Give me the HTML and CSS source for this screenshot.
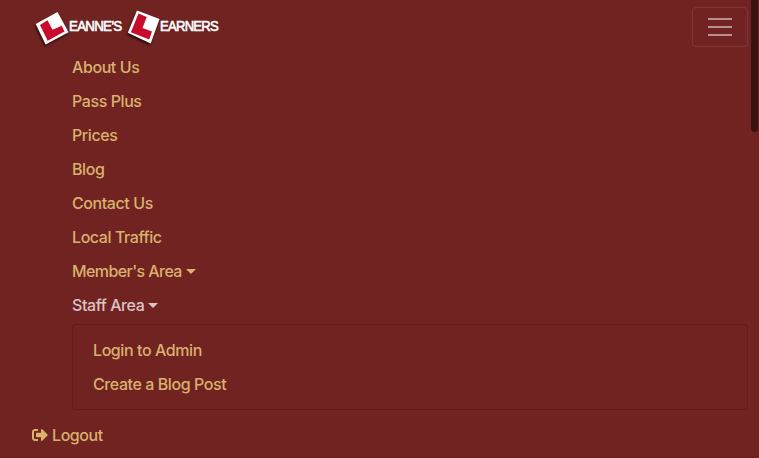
FILE: index.html
```html
<!DOCTYPE html>
<html lang="en">
<head>
<meta charset="utf-8">
<title>Leanne's Learners</title>
<link rel="stylesheet" href="styles.css">
</head>
<body>
<nav class="navbar">
  <header class="navbar-header">
    <a class="brand" aria-label="Leanne's Learners">
      <svg width="210" height="48" viewBox="32 0 210 48">
        <g class="plate">
          <path fill="#fff" d="M35.700 24L57.500 12L68.500 32.200L45.600 44.500Z"/>
          <path fill="#c80a2b" d="M40 25L47.500 20.300L52.500 29.800L61.700 25.800L64.500 31.500L47.700 40.700Z"/>
        </g>
        <text x="69" y="31" textLength="52.500" lengthAdjust="spacingAndGlyphs">EANNE’S</text>
        <g class="plate">
          <path fill="#fff" d="M137 10.500L159.500 19L150.700 43.500L127.800 32.700Z"/>
          <path fill="#c80a2b" d="M138.500 13.600L146.700 17L142.500 28L152 31.500L149.200 39.500L130.900 32.200Z"/>
        </g>
        <text x="160" y="31" textLength="58" lengthAdjust="spacingAndGlyphs">EARNERS</text>
      </svg>
    </a>
    <button class="toggler" aria-label="Toggle navigation"><span></span><span></span><span></span></button>
  </header>
  <ul class="menu">
    <li><a>About Us</a></li>
    <li><a>Pass Plus</a></li>
    <li><a>Prices</a></li>
    <li><a>Blog</a></li>
    <li><a>Contact Us</a></li>
    <li><a>Local Traffic</a></li>
    <li><a class="dropdown members">Member's Area</a></li>
    <li><a class="dropdown active">Staff Area</a></li>
  </ul>
  <ul class="submenu">
    <li><a>Login to Admin</a></li>
    <li><a>Create a Blog Post</a></li>
  </ul>
  <a class="logout"><svg width="16" height="16" viewBox="0 0 512 512"><path fill="currentColor" d="M497 273L329 441c-15 15-41 4.500-41-17v-96H152c-13.300 0-24-10.700-24-24v-96c0-13.300 10.700-24 24-24h136V88c0-21.400 25.900-32 41-17l168 168c9.300 9.400 9.300 24.600 0 34zM192 436v-40c0-6.600-5.400-12-12-12H96c-17.700 0-32-14.300-32-32V160c0-17.700 14.300-32 32-32h84c6.600 0 12-5.400 12-12V76c0-6.600-5.400-12-12-12H96c-53 0-96 43-96 96v192c0 53 43 96 96 96h84c6.600 0 12-5.400 12-12z"/></svg><span>Logout</span></a>
</nav>
<div class="scroll-thumb"></div>
</body>
</html>
```
FILE: styles.css
```css
* { box-sizing: border-box; }
body {
  margin: 0;
  height: 458px;
  overflow: hidden;
  background: #702320;
  color: #d8b26e;
  font: 500 16px/24px Inter, "Liberation Sans", sans-serif;
  letter-spacing: -0.42px;
}
.navbar {
  height: 458px;
  padding: 0 11px 0 32px;
  box-shadow: inset 0 -2px 2px -1px rgba(0, 0, 0, .12);
}
.navbar-header {
  display: flex;
  justify-content: space-between;
  height: 50px;
}
.brand svg { display: block; }
.brand text {
  font: 14px "Liberation Sans", sans-serif;
  letter-spacing: -0.8px;
  fill: #fff;
  stroke: #fff;
  stroke-width: .6px;
}
.plate { filter: drop-shadow(-1px 2px 1px rgba(0, 0, 0, .6)); }
.toggler {
  display: flex;
  flex-direction: column;
  align-items: center;
  justify-content: center;
  gap: 6px;
  width: 56px;
  height: 40px;
  margin-top: 7px;
  padding: 0;
  border: 1px solid #7e3936;
  border-radius: 4px;
  background: none;
}
.toggler span {
  width: 24px;
  height: 2px;
  background: #b98f8e;
}
ul { margin: 0; padding: 0; list-style: none; }
.menu { padding-left: 40px; }
li { height: 34px; padding: 5px 0; white-space: nowrap; }
.dropdown::after {
  content: "";
  display: inline-block;
  margin-left: 4px;
  vertical-align: 3px;
  border: 5px solid transparent;
  border-top-color: currentColor;
  border-bottom: 0;
}
.members { letter-spacing: -0.58px; }
.active { color: #dcc4c6; }
.submenu {
  height: 86px;
  margin: 2px 0 0 40px;
  padding: 8px 20px;
  border: 1px solid #611d19;
  border-radius: 4px;
}
.logout {
  display: flex;
  align-items: center;
  gap: 4px;
  margin-top: 13px;
}
.scroll-thumb {
  position: absolute;
  top: 0;
  right: 1px;
  width: 7px;
  height: 132px;
  border-radius: 0 0 4px 4px;
  background: #3b1211;
}
```
